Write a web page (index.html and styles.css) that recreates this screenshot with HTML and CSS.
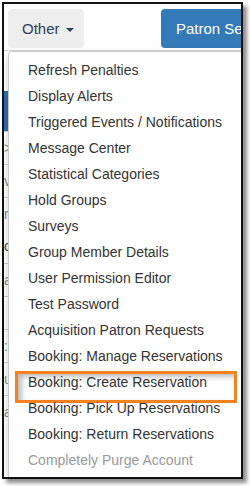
FILE: index.html
```html
<!DOCTYPE HTML>
<html lang="en">
<head>
    <meta charset="UTF-8">
    <title>Patron - Other menu</title>
    <link rel="stylesheet" href="styles.css">
</head>
<body>
    <div class="frame">
        <div class="toolbar">
            <button type="button" class="btn btn-other">Other <span class="caret"></span></button>
            <button type="button" class="btn btn-primary">Patron Search</button>
        </div>
        <div class="page">
            <div class="behind">
                <div class="row row-blue"></div>
                <div class="row row-line">&gt;</div>
                <div class="row row-line">v</div>
                <div class="row row-line">re</div>
                <div class="row row-plain">c</div>
                <div class="row row-line">a</div>
                <div class="row row-line"></div>
                <div class="row row-line">:</div>
                <div class="row row-line">ui</div>
                <div class="row row-line">ar</div>
            </div>
            <ul class="dropdown">
                <li>Refresh Penalties</li>
                <li>Display Alerts</li>
                <li>Triggered Events / Notifications</li>
                <li>Message Center</li>
                <li>Statistical Categories</li>
                <li>Hold Groups</li>
                <li>Surveys</li>
                <li>Group Member Details</li>
                <li>User Permission Editor</li>
                <li>Test Password</li>
                <li>Acquisition Patron Requests</li>
                <li>Booking: Manage Reservations</li>
                <li class="marked">Booking: Create Reservation</li>
                <li>Booking: Pick Up Reservations</li>
                <li>Booking: Return Reservations</li>
                <li class="disabled">Completely Purge Account</li>
            </ul>
        </div>
    </div>
</body>
</html>
```

FILE: styles.css
```css
* { margin:0; padding:0; box-sizing:border-box; font-family:"Liberation Sans", Arial, sans-serif }
body {
    background-color:#ffffff;
    width:250px;
    height:486px;
    overflow:hidden;
}
.frame {
    margin:2px 0 0 2px;
    width:241px;
    height:477px;
    border:2px solid #111111;
    background-color:#ffffff;
    box-shadow:4px 4px 4px rgba(0,0,0,0.45);
    overflow:hidden;
    position:relative;
}
.toolbar {
    display:flex;
    align-items:flex-start;
    padding:5px 0 0 4px;
    height:47px;
    border-bottom:1px solid #d5d5d5;
    white-space:nowrap;
}
.btn {
    height:39px;
    border:none;
    border-radius:4px;
    font-size:15px;
    text-align:left;
    flex-shrink:0;
}
.btn-other {
    width:76px;
    padding-left:14px;
    background-color:#eeeeee;
    color:#2e4157;
}
.caret {
    display:inline-block;
    width:0;
    height:0;
    margin-left:2px;
    vertical-align:middle;
    border-top:4px solid #2e4157;
    border-left:4px solid transparent;
    border-right:4px solid transparent;
}
.btn-primary {
    margin-left:77px;
    width:120px;
    padding-left:15px;
    background-color:#337ab7;
    color:#ffffff;
}
.page {
    position:relative;
    height:430px;
}
.behind {
    padding-top:40px;
    width:8px;
    font-size:14px;
    color:#888888;
}
.row {
    height:33px;
    overflow:hidden;
    line-height:33px;
}
.row-blue {
    height:40px;
    background-color:#2f6ea8;
}
.row-line {
    border-top:1px solid #d0d0d0;
}
.row-plain {
    color:#444444;
}
.dropdown {
    position:absolute;
    top:0;
    left:4px;
    width:260px;
    list-style:none;
    padding:5px 0;
    background-color:#ffffff;
    border:1px solid #c8c8c8;
    border-radius:4px 0 0 0;
    box-shadow:0 4px 10px rgba(0,0,0,0.18);
}
.dropdown li {
    position:relative;
    height:26px;
    line-height:26px;
    padding-left:19px;
    font-size:14px;
    color:#333333;
    white-space:nowrap;
}
.dropdown li.disabled {
    color:#9a9a9a;
}
.dropdown li.marked::after {
    content:"";
    position:absolute;
    top:2px;
    left:6px;
    width:216px;
    height:26px;
    border:3px solid #f5821f;
    box-shadow:inset 4px 3px 5px rgba(0,0,0,0.25);
}
```
